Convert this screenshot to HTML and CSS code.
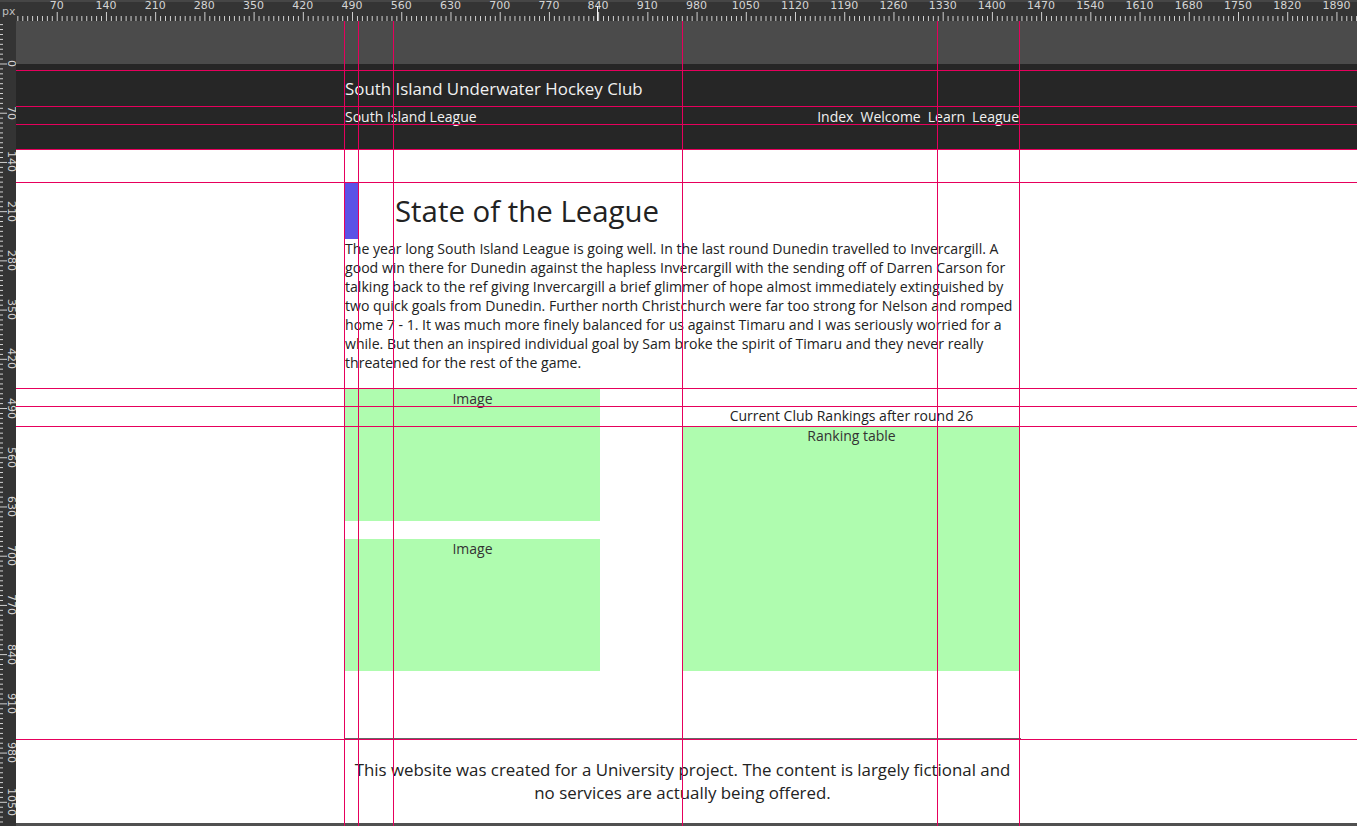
FILE: index.html
```html
<!DOCTYPE html>
<html lang="en">
<head>
<meta charset="utf-8">
<title>South Island Underwater Hockey Club - League</title>
<link rel="stylesheet" href="styles.css">
</head>
<body>
<div class="app">
  <div class="corner">px</div>

  <div class="ruler ruler-top">
    <div class="top-labels">
      <span>70</span><span>140</span><span>210</span><span>280</span><span>350</span><span>420</span><span>490</span><span>560</span><span>630</span><span>700</span><span>770</span><span>840</span><span>910</span><span>980</span><span>1050</span><span>1120</span><span>1190</span><span>1260</span><span>1330</span><span>1400</span><span>1470</span><span>1540</span><span>1610</span><span>1680</span><span>1750</span><span>1820</span><span>1890</span>
    </div>
    <svg class="ticks" width="1341" height="21" viewBox="0 0 1341 21" aria-hidden="true">
      <defs>
        <pattern id="tickTop" x="-8.5" y="0" width="49.22" height="21" patternUnits="userSpaceOnUse">
          <g fill="#d2d2d2" shape-rendering="crispEdges">
            <rect x="0" y="12" width="1" height="9"/>
            <rect x="4.92" y="16" width="1" height="5"/>
            <rect x="9.84" y="16" width="1" height="5"/>
            <rect x="14.77" y="16" width="1" height="5"/>
            <rect x="19.69" y="16" width="1" height="5"/>
            <rect x="24.61" y="16" width="1" height="5"/>
            <rect x="29.53" y="16" width="1" height="5"/>
            <rect x="34.45" y="16" width="1" height="5"/>
            <rect x="39.38" y="16" width="1" height="5"/>
            <rect x="44.30" y="16" width="1" height="5"/>
          </g>
        </pattern>
      </defs>
      <rect width="1341" height="21" fill="url(#tickTop)"/>
    </svg>
    <div class="cursor-mark"></div>
  </div>

  <div class="ruler ruler-left">
    <svg class="ticks" width="16" height="805" viewBox="0 0 16 805" aria-hidden="true">
      <defs>
        <pattern id="tickLeft" x="0" y="42.5" width="16" height="49.22" patternUnits="userSpaceOnUse">
          <g fill="#d2d2d2" shape-rendering="crispEdges">
            <rect x="0" y="0" width="7" height="1"/>
            <rect x="0" y="4.92" width="3" height="1"/>
            <rect x="0" y="9.84" width="3" height="1"/>
            <rect x="0" y="14.77" width="3" height="1"/>
            <rect x="0" y="19.69" width="3" height="1"/>
            <rect x="0" y="24.61" width="3" height="1"/>
            <rect x="0" y="29.53" width="3" height="1"/>
            <rect x="0" y="34.45" width="3" height="1"/>
            <rect x="0" y="39.38" width="3" height="1"/>
            <rect x="0" y="44.30" width="3" height="1"/>
          </g>
        </pattern>
      </defs>
      <rect width="16" height="805" fill="url(#tickLeft)"/>
    </svg>
    <div class="left-labels">
      <span>0</span><span>70</span><span>140</span><span>210</span><span>280</span><span>350</span><span>420</span><span>490</span><span>560</span><span>630</span><span>700</span><span>770</span><span>840</span><span>910</span><span>980</span><span>1050</span>
    </div>
  </div>

  <div class="canvas">
    <div class="pasteboard"></div>
    <div class="doc">
      <header class="site-header">
        <div class="wrap">
          <div class="site-title">South Island Underwater Hockey Club</div>
          <div class="nav-row">
            <span class="section-name">South Island League</span>
            <nav class="site-nav">
              <a href="#">Index</a>
              <a href="#">Welcome</a>
              <a href="#">Learn</a>
              <a href="#">League</a>
            </nav>
          </div>
        </div>
      </header>

      <main class="wrap main">
        <div class="title-row">
          <div class="accent"></div>
          <h1 class="title">State of the League</h1>
        </div>
        <p class="intro">The year long South Island League is going well. In the last round Dunedin travelled to Invercargill. A good win there for Dunedin against the hapless Invercargill with the sending off of Darren Carson for talking back to the ref giving Invercargill a brief glimmer of hope almost immediately extinguished by two quick goals from Dunedin. Further north Christchurch were far too strong for Nelson and romped home 7 - 1. It was much more finely balanced for us against Timaru and I was seriously worried for a while. But then an inspired individual goal by Sam broke the spirit of Timaru and they never really threatened for the rest of the game.</p>

        <div class="media">
          <div class="images">
            <div class="ph img">Image</div>
            <div class="ph img">Image</div>
          </div>
          <div class="rankings">
            <div class="caption">Current Club Rankings after round 26</div>
            <div class="ph table">Ranking table</div>
          </div>
        </div>
      </main>

      <footer class="site-footer">
        <p>This website was created for a University project. The content is largely fictional and no services are actually being offered.</p>
      </footer>
    </div>

    <div class="guides" aria-hidden="true">
      <div class="guide gh y70"></div>
      <div class="guide gh y106"></div>
      <div class="guide gh y124"></div>
      <div class="guide gh y149"></div>
      <div class="guide gh y182"></div>
      <div class="guide gh y388"></div>
      <div class="guide gh y406"></div>
      <div class="guide gh y426"></div>
      <div class="guide gh y739"></div>
      <div class="guide gv x344"></div>
      <div class="guide gv x358"></div>
      <div class="guide gv x393"></div>
      <div class="guide gv x682"></div>
      <div class="guide gv x937"></div>
      <div class="guide gv x1019"></div>
    </div>
  </div>
</div>
</body>
</html>
```

FILE: styles.css
```css
* { box-sizing: border-box; }

html, body {
  margin: 0;
  padding: 0;
  width: 1357px;
  height: 826px;
  overflow: hidden;
  background: #343434;
}

body {
  font-family: "Open Sans", "Liberation Sans", sans-serif;
}

.app {
  display: grid;
  grid-template-columns: 16px 1341px;
  grid-template-rows: 21px 805px;
  width: 1357px;
  height: 826px;
}

/* ---------- rulers ---------- */
.corner {
  background: linear-gradient(#464646 0 2px, #343434 2px);
  color: #bdbdbd;
  font: 11px/12px "DejaVu Sans", sans-serif;
  padding: 6px 0 0 2px;
}

.ruler {
  position: relative;
  overflow: hidden;
  background: #343434;
  color: #d4d4d4;
  font-family: "DejaVu Sans", sans-serif;
  font-size: 11px;
}

.ruler-top {
  background: linear-gradient(#464646 0 2px, #343434 2px);
}

.ruler .ticks {
  position: absolute;
  left: 0;
  top: 0;
}

.top-labels {
  display: flex;
  padding-left: 16.1px;
}

.top-labels span {
  flex: 0 0 49.22px;
  text-align: center;
  line-height: 12px;
  white-space: nowrap;
}

.cursor-mark {
  position: absolute;
  left: 581px;
  top: 6px;
  width: 1px;
  height: 15px;
  background: #f4f4f4;
}

.left-labels {
  position: relative;
  display: flex;
  flex-direction: column;
  padding-top: 17.9px;
}

.left-labels span {
  flex: 0 0 49.22px;
  height: 49.22px;
  display: flex;
  align-items: center;
  justify-content: center;
  writing-mode: vertical-rl;
  line-height: 12px;
  padding-left: 6px;
  white-space: nowrap;
}

/* ---------- canvas ---------- */
.canvas {
  position: relative;
  overflow: hidden;
  background: #505050;
}

.pasteboard {
  height: 43px;
  background: #4b4b4b;
}

.doc {
  background: #ffffff;
  color: #222222;
}

.wrap {
  margin-left: 329px;
  width: 675px;
}

/* header */
.site-header {
  height: 85px;
  background: #262626;
  color: #f1f1f1;
  padding-top: 13px;
}

.site-title {
  font-size: 16.87px;
  line-height: 23px;
}

.nav-row {
  display: flex;
  justify-content: space-between;
  margin-top: 7px;
  font-size: 14px;
  line-height: 19px;
}

.site-nav {
  display: flex;
  gap: 7px;
  padding-right: 1px;
}

.site-nav a {
  color: #f1f1f1;
  text-decoration: none;
}

/* main */
.main {
  padding-top: 33px;
}

.title-row {
  display: flex;
  height: 57px;
}

.accent {
  width: 14px;
  background: #5b52e6;
}

.title {
  margin: 0 0 0 36px;
  font-size: 29.4px;
  font-weight: 400;
  line-height: 57px;
  padding-top: 1px;
  color: #222222;
}

.intro {
  margin: 0;
  font-size: 14.1px;
  line-height: 19px;
  color: #222222;
}

.media {
  display: flex;
  justify-content: space-between;
  margin-top: 17px;
}

.images {
  width: 255px;
  display: flex;
  flex-direction: column;
  gap: 18px;
}

.ph {
  background: #affcaf;
  text-align: center;
  font-size: 14px;
  line-height: 20px;
  color: #333333;
}

.img {
  height: 132px;
}

.rankings {
  width: 337px;
  padding-top: 17px;
  text-align: center;
}

.caption {
  font-size: 14px;
  line-height: 20px;
  color: #222222;
}

.table {
  height: 245px;
}

/* footer */
.site-footer {
  margin: 67px 0 0 328px;
  width: 677px;
  border-top: 2px solid #666666;
  padding: 18px 0 19px;
  text-align: center;
}

.site-footer p {
  margin: 0;
  font-size: 16.87px;
  line-height: 23px;
  color: #222222;
}

/* ---------- guides (overlay) ---------- */
.guides {
  position: absolute;
  inset: 0;
  pointer-events: none;
}

.guide {
  position: absolute;
  background: #e6005c;
}

.gh { left: 0; right: 0; height: 1px; }
.gv { top: 0; bottom: 0; width: 1px; }

.y70 { top: 49px; }
.y106 { top: 85px; }
.y124 { top: 103px; }
.y149 { top: 128px; }
.y182 { top: 161px; }
.y388 { top: 367px; }
.y406 { top: 385px; }
.y426 { top: 405px; }
.y739 { top: 718px; }

.x344 { left: 328px; }
.x358 { left: 342px; }
.x393 { left: 377px; }
.x682 { left: 666px; }
.x937 { left: 921px; }
.x1019 { left: 1003px; }
```
